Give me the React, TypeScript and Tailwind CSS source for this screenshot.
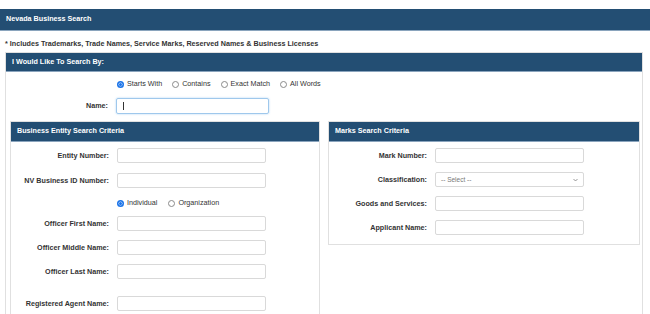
import React from "react";

const font = { fontFamily: '"Liberation Sans", Arial, sans-serif' };

function Radio({ checked = false, label }: { checked?: boolean; label: string }) {
  return (
    <span className="flex items-center gap-[3px]">
      {checked ? (
        <span className="w-[7px] h-[7px] rounded-full bg-[#1a73e8] flex items-center justify-center">
          <span className="w-[3px] h-[3px] rounded-full bg-[#1a73e8] ring-[0.5px] ring-[#dbe8fb]" />
        </span>
      ) : (
        <span className="w-[7px] h-[7px] rounded-full border border-[#8a8a8a] bg-white" />
      )}
      <span className="text-[7.2px] text-[#333]">{label}</span>
    </span>
  );
}

function Field({ label, select = false }: { label: string; select?: boolean }) {
  return (
    <div className="flex items-center">
      <label className="w-[98px] text-right text-[7.2px] font-bold text-[#333] leading-none">{label}</label>
      <div className="ml-[8px] w-[149px] h-[15px] border border-[#d9d9d9] rounded-[2px] bg-white flex items-center justify-between px-[5px]">
        {select && (
          <>
            <span className="text-[6.5px] text-[#777]">-- Select --</span>
            <svg width="5" height="4" viewBox="0 0 10 6" fill="none" stroke="#777" strokeWidth="1.5">
              <path d="M1 1l4 4 4-4" />
            </svg>
          </>
        )}
      </div>
    </div>
  );
}

function PanelHeader({ title }: { title: string }) {
  return (
    <div className="h-[20px] bg-[#234e73] flex items-center px-[6px] border-b border-[#8aa4bd]">
      <span className="text-white font-bold text-[7.2px]">{title}</span>
    </div>
  );
}

export default function App() {
  return (
    <div className="w-[650px] h-[314px] overflow-hidden bg-white" style={font}>
      <div className="h-[9px]" />
      <div className="h-[22px] bg-[#234e73] flex items-center px-[6px] border-b border-[#8aa4bd]">
        <span className="text-white font-bold text-[7.2px]">Nevada Business Search</span>
      </div>

      <p className="mt-[8px] ml-[5px] text-[7.2px] font-bold text-[#333] leading-[10px]">
        * Includes Trademarks, Trade Names, Service Marks, Reserved Names &amp; Business Licenses
      </p>

      <div className="mt-[3px] ml-[5px] w-[638px] border border-[#e0e0e0] h-[300px]">
        <div className="h-[19px] bg-[#234e73] flex items-center px-[6px] border-b border-[#8aa4bd]">
          <span className="text-white font-bold text-[7.2px]">I Would Like To Search By:</span>
        </div>

        <div className="mt-[7px] ml-[111px] flex items-center gap-[10px] h-[10px]">
          <Radio checked label="Starts With" />
          <Radio label="Contains" />
          <Radio label="Exact Match" />
          <Radio label="All Words" />
        </div>

        <div className="mt-[9px] flex items-center">
          <label className="w-[102px] text-right text-[7.2px] font-bold text-[#333]">Name:</label>
          <div className="ml-[8px] w-[153px] h-[16px] border border-[#9fc8ec] rounded-[2px] shadow-[0_0_2px_rgba(102,175,233,0.6)] flex items-center px-[6px]">
            <span className="w-px h-[8px] bg-[#333]" />
          </div>
        </div>

        <div className="mt-[7px] flex items-start gap-[8px] pl-[4px]">
          <div className="w-[310px] border border-[#e0e0e0] h-[200px]">
            <PanelHeader title="Business Entity Search Criteria" />
            <div className="pt-[6px] flex flex-col">
              <Field label="Entity Number:" />
              <div className="mt-[10px]">
                <Field label="NV Business ID Number:" />
              </div>
              <div className="mt-[10px] ml-[106px] flex items-center gap-[11px] h-[10px]">
                <Radio checked label="Individual" />
                <Radio label="Organization" />
              </div>
              <div className="mt-[8px]">
                <Field label="Officer First Name:" />
              </div>
              <div className="mt-[9px]">
                <Field label="Officer Middle Name:" />
              </div>
              <div className="mt-[9px]">
                <Field label="Officer Last Name:" />
              </div>
              <div className="mt-[17px]">
                <Field label="Registered Agent Name:" />
              </div>
            </div>
          </div>

          <div className="w-[312px] border border-[#e0e0e0] pb-[9px]">
            <PanelHeader title="Marks Search Criteria" />
            <div className="pt-[6px] flex flex-col gap-[9px]">
              <Field label="Mark Number:" />
              <Field label="Classification:" select />
              <Field label="Goods and Services:" />
              <Field label="Applicant Name:" />
            </div>
          </div>
        </div>
      </div>
    </div>
  );
}
